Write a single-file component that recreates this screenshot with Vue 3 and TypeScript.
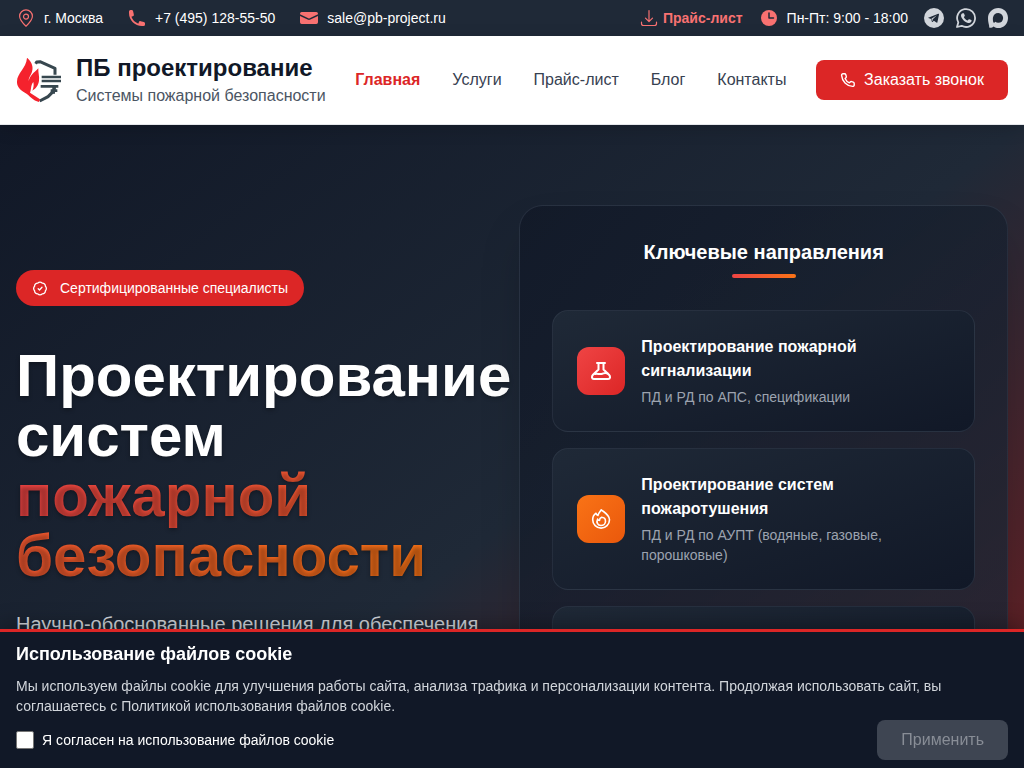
<script setup lang="ts">
import { ref } from 'vue'

interface NavLink {
  label: string
  active?: boolean
}

const links: NavLink[] = [
  { label: 'Главная', active: true },
  { label: 'Услуги' },
  { label: 'Прайс-лист' },
  { label: 'Блог' },
  { label: 'Контакты' },
]

const agreed = ref(false)
</script>

<template>
  <div class="page">
    <div class="topbar">
      <div class="contacts">
        <span class="contact">
          <svg class="ico" viewBox="0 0 20 20" fill="none" stroke="currentColor" stroke-width="1.2">
            <path d="M10 18.2C7 15.4 3.6 12 3.6 8.3a6.4 6.4 0 0 1 12.8 0c0 3.700-3.400 7.100-6.400 9.900z" stroke-linejoin="round" />
            <circle cx="10" cy="8.600" r="2.500" />
          </svg>
          г. Москва
        </span>
        <a class="contact" href="#phone">
          <svg class="ico" viewBox="0 0 20 20" fill="currentColor">
            <path d="M2 3.500A1.500 1.500 0 0 1 3.500 2h1.150a1.500 1.500 0 0 1 1.460 1.180l.72 3.220a1.500 1.500 0 0 1-1.050 1.770l-.93.270c-.27.080-.420.360-.330.620a11.500 11.500 0 0 0 6.420 6.420c.260.090.540-.060.620-.330l.270-.930a1.500 1.500 0 0 1 1.770-1.050l3.220.720A1.500 1.500 0 0 1 18 15.350v1.150a1.500 1.500 0 0 1-1.500 1.500H15C7.800 18 2 12.200 2 5z" />
          </svg>
          +7 (495) 128-55-50
        </a>
        <a class="contact" href="#mail">
          <svg class="ico" viewBox="0 0 20 20" fill="currentColor">
            <path d="M1 6.200V5.700A1.700 1.700 0 0 1 2.700 4h14.600A1.700 1.700 0 0 1 19 5.700v.5l-8.300 4.100a1.500 1.500 0 0 1-1.400 0z" />
            <path d="M1 7.900v6.400A1.700 1.700 0 0 0 2.700 16h14.600a1.700 1.700 0 0 0 1.700-1.700V7.900l-7.600 3.700a3 3 0 0 1-2.800 0z" />
          </svg>
          sale@pb-project.ru
        </a>
      </div>
      <div class="aside">
        <a class="price" href="#price">
          <svg class="ico" viewBox="0 0 20 20" fill="none" stroke="currentColor" stroke-width="1.200" stroke-linecap="round" stroke-linejoin="round">
            <path d="M10 2.500v11M6.500 10.200l3.500 3.500 3.500-3.500M2.500 14v1.500a2 2 0 0 0 2 2h11a2 2 0 0 0 2-2V14" />
          </svg>
          Прайс-лист
        </a>
        <span class="contact">
          <svg class="ico" viewBox="0 0 20 20">
            <circle cx="10" cy="10" r="8" fill="currentColor" />
            <path d="M10 5v5h4.500" fill="none" stroke="#1f2937" stroke-width="1.500" stroke-linecap="round" stroke-linejoin="round" />
          </svg>
          Пн-Пт: 9:00 - 18:00
        </span>
        <div class="social">
          <a href="#telegram" aria-label="Telegram">
            <svg viewBox="0 0 20 20">
              <circle cx="10" cy="10" r="10" fill="currentColor" />
              <path d="M4.200 9.800l10-4.100c.6-.2.900.1.800.7l-1.600 7.800c-.1.500-.5.700-1 .4l-2.500-1.900-1.300 1.200c-.3.300-.6.200-.7-.2l-.8-2.800-2.800-.8c-.4-.1-.4-.2-.1-.3z" fill="#1f2937" />
              <path d="M7.400 10.800l5.400-3.500-4.200 4.200-.2 1.900z" fill="currentColor" />
            </svg>
          </a>
          <a href="#whatsapp" aria-label="WhatsApp">
            <svg viewBox="0 0 20 20">
              <path d="M1 19l1.300-4.600A8.950 8.950 0 1 1 5.700 17.800z" fill="none" stroke="currentColor" stroke-width="1.800" stroke-linejoin="round" />
              <path d="M6.700 5.200h.7c.3 0 .5.100.6.400l.8 1.900c.1.300 0 .5-.8 1.400-.1.200-.1.300 0 .5.9 1.500 1.900 2.300 3.400 3 .2.100.4.100.5-.1l.9-1c.2-.2.300-.2.600-.1l1.900.9c.3.200.3.300.3.500 0 1.600-1.200 2.500-2.500 2.500-1.200 0-3.500-.8-5.200-2.400C6.200 11 5 9.200 5 7.600c0-1 .8-2.400 1.700-2.400z" fill="currentColor" />
            </svg>
          </a>
          <a href="#max" aria-label="Max">
            <svg viewBox="0 0 20 20">
              <path d="M10.300 0C15.700 0 20 4.300 20 9.900S15.700 20 10.400 20c-1.900 0-3.300-.5-4.700-1.500C4.500 19.600 1.300 20.600 1.200 19 1.200 17.300.8 16.400.5 15 .2 13.500 0 11.800 0 9.900 0 4.500 4.600 0 10.300 0zm.1 5c-2.900-.1-5 1.900-5.400 4.600-.4 2.300.2 5 .9 5.200.3.100 1-.5 1.500-1 .8.500 1.600.9 2.700 1a5 5 0 0 0 5-4.600c.2-2.800-2-5-4.700-5.200z" fill="currentColor" fill-rule="evenodd" />
            </svg>
          </a>
        </div>
      </div>
    </div>

    <header class="header">
      <a class="brand" href="#home">
        <svg class="logo" viewBox="24 30 144 144">
          <path d="M83 53l3-5 10-1 45 20v19" fill="none" stroke="#37474f" stroke-width="9" stroke-linejoin="round" />
          <path d="M101 93h58M101 105h58M98 121h53" fill="none" stroke="#37474f" stroke-width="8" />
          <path d="M140 122l-2 12-18 18-25 13" fill="none" stroke="#37474f" stroke-width="9" />
          <path d="M137 121v22M128 134h20" fill="none" stroke="#37474f" stroke-width="8" />
          <path d="M58 36c15 14 19 29 13 44-3 9-10 15-9 25 4-17 15-24 29-38-1 14 4 24 2 37-2 15-10 23-20 30 4-9 5-17 3-26-9 11-5 20-10 32l30 20-3 8c-18-4-28-19-41-27-17-9-26-20-25-35 1-25 27-38 30-70z" fill="#f5222d" />
        </svg>
        <span class="names">
          <strong>ПБ проектирование</strong>
          <span>Системы пожарной безопасности</span>
        </span>
      </a>
      <nav class="nav">
        <a v-for="l in links" :key="l.label" href="#" :class="{ active: l.active }">{{ l.label }}</a>
      </nav>
      <button class="call" type="button">
        <svg viewBox="0 0 16 16" fill="none" stroke="currentColor" stroke-width="1.400" stroke-linejoin="round">
          <path d="M3 1.800h1.600c.6 0 1 .3 1.200.9l.5 1.700c.1.500 0 1-.4 1.300l-.8.800c.8 2 2.300 3.500 4.300 4.300l.8-.8c.4-.4.9-.5 1.400-.4l1.700.6c.6.200.9.600.9 1.200V13c0 .9-.7 1.500-1.600 1.400C6.600 14 2.100 9.300 1.600 3.400c-.1-.9.500-1.600 1.400-1.600z" />
        </svg>
        Заказать звонок
      </button>
    </header>

    <main class="hero">
      <div class="stage">
        <section class="intro">
          <span class="badge">
            <svg viewBox="0 0 16 16" fill="none" stroke="currentColor" stroke-width="1.300" stroke-linecap="round" stroke-linejoin="round">
              <path d="M13.400 6.300a3 3 0 0 1 0 4.400 3 3 0 0 1-3.200 3.200 3 3 0 0 1-4.400 0 3 3 0 0 1-3.200-3.200 3 3 0 0 1 0-4.400 3 3 0 0 1 3.200-3.200 3 3 0 0 1 4.400 0 3 3 0 0 1 3.200 3.200z" />
              <path d="M6.200 8.800l1.300 1.200 2.500-2.700" />
            </svg>
            Сертифицированные специалисты
          </span>
          <h1>Проектирование систем <br /><span class="fire">пожарной безопасности</span></h1>
          <p class="lead">Научно-обоснованные решения для обеспечения</p>
        </section>

        <section class="panel">
          <h2>Ключевые направления</h2>
          <div class="rule"></div>
          <div class="items">
            <article class="item">
              <span class="tile red">
                <svg viewBox="0 0 24 24" fill="none" stroke="currentColor" stroke-width="2" stroke-linejoin="round" stroke-linecap="round">
                  <path d="M8 4h8M9.500 4v6.500L4 15.700c-1.700 1.800-1.300 4.300.8 4.300h14.400c2.100 0 2.500-2.500.8-4.300l-5.500-5.200V4" />
                  <path d="M6 15c2.500-.8 4 .5 6.500 0s3.500-1.800 6-.5" />
                </svg>
              </span>
              <div>
                <h3>Проектирование пожарной сигнализации</h3>
                <p>ПД и РД по АПС, спецификации</p>
              </div>
            </article>
            <article class="item">
              <span class="tile orange">
                <svg viewBox="0 0 24 24" fill="none" stroke="currentColor" stroke-width="1.600" stroke-linejoin="round" stroke-linecap="round">
                  <path d="M12.300 2.800c-1.200 1.900-3 3.300-3.400 5.700C7.900 8.200 7.300 7.200 7 6.200 4.700 7.800 3.700 10.200 3.700 12.700a8.400 8.400 0 0 0 16.800 0c0-4.700-4.700-7-8.200-9.900z" />
                  <path d="M12.600 10.200c-1.600.6-2.100 1.900-2.100 3.200-.9-.1-1.500-.6-1.900-1.400-1.700 3.600.3 6.500 3.300 6.500 2.500 0 4.600-1.700 4.600-4.300 0-2.200-1.600-3.900-3.900-4z" />
                </svg>
              </span>
              <div>
                <h3>Проектирование систем пожаротушения</h3>
                <p>ПД и РД по АУПТ (водяные, газовые, порошковые)</p>
              </div>
            </article>
            <article class="item"></article>
          </div>
        </section>
      </div>
    </main>

    <aside class="cookies">
      <h4>Использование файлов cookie</h4>
      <p>
        Мы используем файлы cookie для улучшения работы сайта, анализа трафика и персонализации контента.
        Продолжая использовать сайт, вы соглашаетесь с Политикой использования файлов cookie.
      </p>
      <div class="consent">
        <label for="agree">
          <input id="agree" v-model="agreed" type="checkbox" />
          Я согласен на использование файлов cookie
        </label>
        <button type="button" :disabled="!agreed">Применить</button>
      </div>
    </aside>
  </div>
</template>

<style>
body {
  background: #111827;
}
</style>

<style scoped>
.page,
.page * {
  box-sizing: border-box;
}
.page {
  font-family: "Liberation Sans", Arial, sans-serif;
  font-size: 16px;
  line-height: 24px;
  height: 100vh;
  display: flex;
  flex-direction: column;
  overflow: hidden;
  color: #fff;
}
a {
  color: inherit;
  text-decoration: none;
}
h1, h2, h3, h4, p {
  margin: 0;
}
svg {
  display: block;
  flex: none;
}
button {
  font: inherit;
  border: 0;
  border-radius: 8px;
  height: 40px;
  padding: 0 24px;
}
.topbar {
  flex: none;
  display: flex;
  justify-content: space-between;
  align-items: center;
  padding: 8px 16px;
  background: #1f2937;
  font-size: 14px;
  line-height: 20px;
}
.contacts {
  display: flex;
  gap: 24px;
}
.contact {
  display: flex;
  align-items: center;
  gap: 8px;
}
.ico {
  width: 20px;
  height: 20px;
  color: #f87171;
}
.aside {
  display: flex;
  gap: 16px;
}
.price {
  display: flex;
  align-items: center;
  gap: 4px;
  color: #f87171;
  font-weight: 700;
}
.social {
  display: flex;
  gap: 12px;
  color: #d1d5db;
}
.social svg {
  width: 20px;
  height: 20px;
}
.header {
  flex: none;
  position: relative;
  z-index: 1;
  display: flex;
  justify-content: space-between;
  align-items: center;
  padding: 16px;
  background: #fff;
  border-bottom: 1px solid #e5e7eb;
  box-shadow: 0 4px 16px rgba(0, 0, 0, 0.15);
}
.brand {
  display: flex;
  align-items: center;
  gap: 12px;
}
.logo {
  width: 48px;
  height: 48px;
}
.names {
  display: flex;
  flex-direction: column;
  color: #4b5563;
}
.names strong {
  font-size: 24px;
  line-height: 32px;
  color: #111827;
}
.nav {
  display: flex;
  gap: 32px;
  color: #374151;
}
.nav .active {
  color: #dc2626;
  font-weight: 700;
}
.call {
  display: flex;
  align-items: center;
  gap: 8px;
  background: #dc2626;
  color: #fff;
}
.call svg {
  width: 16px;
  height: 16px;
}
.hero {
  flex: 1;
  min-height: 0;
  overflow: hidden;
}
.stage {
  min-height: 787px;
  display: grid;
  grid-template-columns: 1fr 1fr;
  align-items: start;
  gap: 8px;
  padding: 80px 16px;
  background: linear-gradient(to bottom right, #111827, #1f2937 50%, #7f1d1d);
}
.intro {
  padding-top: 65px;
}
.badge {
  display: inline-flex;
  align-items: center;
  gap: 12px;
  padding: 8px 16px;
  border-radius: 18px;
  background: #dc2626;
  font-size: 14px;
  line-height: 20px;
}
.badge svg {
  width: 16px;
  height: 16px;
}
h1 {
  margin-top: 40px;
  font-size: 60px;
  line-height: 60px;
  text-shadow: 0 2px 4px rgba(0, 0, 0, 0.3);
}
.fire {
  background: linear-gradient(to right, #ef4444, #f97316);
  -webkit-background-clip: text;
  background-clip: text;
  color: transparent;
}
.lead {
  margin-top: 24px;
  font-size: 20px;
  line-height: 28px;
  color: #d1d5db;
}
.panel {
  min-height: 627px;
  padding: 32px;
  border: 1px solid rgba(55, 65, 81, 0.5);
  border-radius: 24px;
  background: linear-gradient(to bottom right, rgba(17, 24, 39, 0.8), rgba(31, 41, 55, 0.8));
  box-shadow: 0 24px 48px -12px rgba(0, 0, 0, 0.25);
}
h2 {
  font-size: 20px;
  line-height: 28px;
  text-align: center;
}
.rule {
  width: 64px;
  height: 4px;
  margin: 8px auto 32px;
  border-radius: 2px;
  background: linear-gradient(to right, #ef4444, #f97316);
}
.items {
  display: flex;
  flex-direction: column;
  gap: 16px;
}
.item {
  display: flex;
  align-items: center;
  gap: 16px;
  min-height: 122px;
  padding: 24px;
  border: 1px solid rgba(55, 65, 81, 0.5);
  border-radius: 16px;
  background: linear-gradient(to bottom right, #1f2937, #111827);
}
.tile {
  flex: none;
  width: 48px;
  height: 48px;
  display: grid;
  place-items: center;
  border-radius: 12px;
}
.tile svg {
  width: 24px;
  height: 24px;
}
.red {
  background: linear-gradient(to bottom right, #ef4444, #dc2626);
}
.orange {
  background: linear-gradient(to bottom right, #f97316, #ea580c);
}
h3 {
  font-size: 16px;
  line-height: 24px;
}
.item p {
  margin-top: 4px;
  font-size: 14px;
  line-height: 20px;
  color: #9ca3af;
}
.cookies {
  position: fixed;
  inset: auto 0 0;
  z-index: 2;
  padding: 8px 16px;
  border-top: 3px solid #dc2626;
  background: #111827;
  box-shadow: 0 -4px 20px rgba(0, 0, 0, 0.3);
}
h4 {
  font-size: 18px;
  line-height: 28px;
}
.cookies p {
  margin: 8px 0 4px;
  font-size: 14px;
  line-height: 20px;
  color: #d1d5db;
}
.consent {
  display: flex;
  justify-content: space-between;
  align-items: center;
}
.consent label {
  display: flex;
  align-items: center;
  gap: 8px;
  font-size: 14px;
  line-height: 20px;
}
.consent input {
  appearance: none;
  width: 18px;
  height: 18px;
  margin: 0;
  border: 1px solid #767676;
  border-radius: 2px;
  background: #fff;
}
.consent input:checked {
  background: #dc2626;
}
.consent button {
  background: #dc2626;
  color: #fff;
}
.consent button:disabled {
  background: #3e4552;
  color: #888d96;
}
</style>
